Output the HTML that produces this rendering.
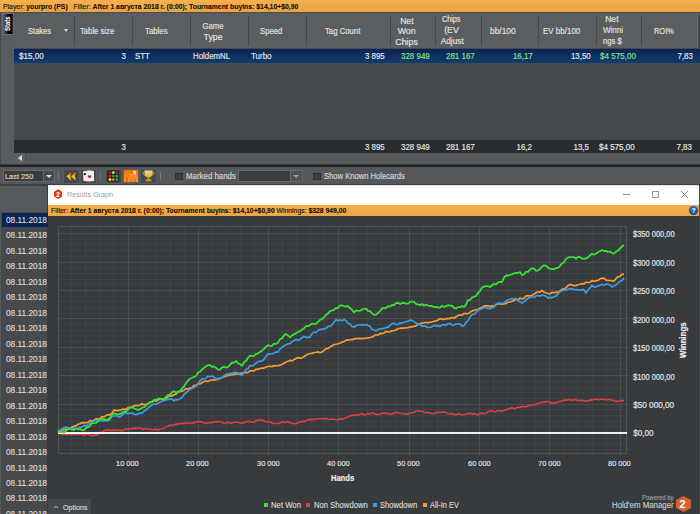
<!DOCTYPE html>
<html><head><meta charset="utf-8">
<style>
*{margin:0;padding:0;box-sizing:border-box}
html,body{width:700px;height:514px;overflow:hidden;background:#4a4d50;font-family:"Liberation Sans",sans-serif;position:relative}
.a{position:absolute}
.t{position:absolute;white-space:nowrap;line-height:1;-webkit-text-stroke:0.15px currentColor}
.sep{position:absolute;width:1px;background:#45484b;top:16px;height:30px}
.tri{position:absolute;width:0;height:0}
</style></head><body>
<!-- top filter bar -->
<div class="a" style="left:0;top:0;width:700px;height:12px;background:linear-gradient(#f6b050,#eba445)"></div>

<!-- stats grid -->
<div class="a" style="left:0;top:12px;width:14px;height:152px;background:#5a5d60;border-left:1px solid #45484b"></div>
<div class="a" style="left:1.5px;top:13.3px;width:12.5px;height:21.5px;background:linear-gradient(to right,#5a5d60 0,#3a3c3e 30%,#000 55%,#000 80%,#2a2c2e);border:1px solid #6a6d70"></div>
<div class="t" style="left:4.6px;top:31.3px;font-size:6.6px;color:#f4f4f4;transform:rotate(-90deg) scaleX(0.9);transform-origin:0 0;font-weight:bold">Stats</div>
<div class="a" style="left:14px;top:13px;width:686px;height:35px;background:#5b5e61"></div>
<div class="a" style="left:14px;top:48px;width:686px;height:92px;background:#474a4d"></div>
<div class="a" style="left:14px;top:49px;width:686px;height:14px;background:linear-gradient(#0a2452,#123c70)"></div>
<div class="a" style="left:14px;top:140px;width:686px;height:13px;background:#2a2d30"></div>
<div class="a" style="left:14px;top:153px;width:686px;height:11px;background:#56595c"></div>
<div class="a" style="left:15px;top:153px;width:11px;height:11px;background:#5e6164;border-right:1px solid #4a4d50"></div>
<div class="tri" style="left:18px;top:155px;border-top:3.5px solid transparent;border-bottom:3.5px solid transparent;border-right:4px solid #ddd"></div>
<div class="a" style="left:0;top:164px;width:700px;height:1px;background:#3a3d40"></div><div class="a" style="left:0;top:165px;width:700px;height:2px;background:#1e2022"></div>

<div class="sep" style="left:74px"></div>
<div class="sep" style="left:132px"></div>
<div class="sep" style="left:190px"></div>
<div class="sep" style="left:248px"></div>
<div class="sep" style="left:306px"></div>
<div class="sep" style="left:390px"></div>
<div class="sep" style="left:435px"></div>
<div class="sep" style="left:481px"></div>
<div class="sep" style="left:538px"></div>
<div class="sep" style="left:596px"></div>
<div class="sep" style="left:641px"></div>
<div class="a" style="left:697px;top:15px;width:3px;height:33px;background:#46494c;border-left:1px solid #6a6d70"></div>
<div class="tri" style="left:64px;top:29px;border-left:2.5px solid transparent;border-right:2.5px solid transparent;border-top:3px solid #ddd"></div>

<!-- toolbar -->
<div class="a" style="left:0;top:167px;width:700px;height:18px;background:#55585b"></div>
<div class="a" style="left:3px;top:170px;width:52px;height:12px;background:#3a3d40;border:1px solid #66696c"></div>
<div class="a" style="left:43px;top:170px;width:12px;height:12px;background:#45484b;border:1px solid #66696c"></div>
<div class="tri" style="left:46px;top:175px;border-left:3px solid transparent;border-right:3px solid transparent;border-top:3px solid #ddd"></div>
<div class="a" style="left:58px;top:172px;width:1px;height:8px;background:#777"></div>
<div class="a" style="left:62.5px;top:168.5px;width:17px;height:15px;background:#45484b;border:1px solid #5a5d60;border-radius:2px"></div>
<svg class="a" style="left:62px;top:166px" width="18" height="18"><defs><linearGradient id="rw" x1="0" y1="0" x2="0" y2="1"><stop offset="0" stop-color="#f07010"/><stop offset="1" stop-color="#f8f010"/></linearGradient></defs>
<path d="M4.2 10.3L9.2 6.2L8.2 10.3L9.2 14.4Z M8.8 10.3L13.8 6.2L12.8 10.3L13.8 14.4Z" fill="url(#rw)"/></svg>
<div class="a" style="left:80px;top:168.5px;width:17px;height:15px;background:#45484b;border:1px solid #5a5d60;border-radius:2px"></div>
<svg class="a" style="left:80px;top:166px" width="18" height="18"><path d="M3 5.5L9 4.2L14 5L14.2 15L9 15.6L3.5 15Z" fill="#f0f0f0"/><circle cx="4.8" cy="8.2" r="1.1" fill="#111"/><path d="M7.8 10.2C7.8 9 9.2 8.8 9.6 9.8C10 8.8 11.4 9 11.4 10.2C11.4 11.3 9.6 12.5 9.6 12.5C9.6 12.5 7.8 11.3 7.8 10.2Z" fill="#e01818"/></svg>
<div class="a" style="left:100px;top:172px;width:1px;height:8px;background:#6a6d70"></div>
<div class="a" style="left:105px;top:168.5px;width:17px;height:15px;background:#45484b;border:1px solid #5a5d60;border-radius:2px"></div>
<svg class="a" style="left:105px;top:166px" width="18" height="18"><rect x="2.5" y="4.5" width="11.5" height="11" fill="#161616"/>
<circle cx="5" cy="6.4" r="1.5" fill="#c81818"/><circle cx="8.3" cy="6.4" r="1.5" fill="#90e090"/><circle cx="11.9" cy="6.4" r="1.5" fill="#c81818"/>
<circle cx="5" cy="10.1" r="1.5" fill="#e02020"/><circle cx="8.3" cy="10.1" r="1.5" fill="#18a818"/><circle cx="11.9" cy="10.1" r="1.5" fill="#20c020"/>
<circle cx="5" cy="13.5" r="1.5" fill="#f0e020"/><circle cx="8.3" cy="13.5" r="1.5" fill="#f06030"/><circle cx="11.9" cy="13.5" r="1.5" fill="#20b020"/></svg>
<div class="a" style="left:122.5px;top:169px;width:16px;height:14px;background:linear-gradient(#f07000,#ffa400);border:1px solid #5a6070;border-radius:1px"></div>
<div class="a" style="left:126px;top:176.5px;width:2px;height:5px;background:#f06430"></div>
<div class="a" style="left:129.5px;top:173.5px;width:2px;height:8px;background:linear-gradient(#f8a080,#f06430)"></div>
<div class="a" style="left:133px;top:170.5px;width:2.5px;height:11px;background:linear-gradient(#fff0e0,#f89060 40%,#f06430)"></div>
<div class="a" style="left:140px;top:168.5px;width:17px;height:15px;background:#45484b;border:1px solid #5a5d60;border-radius:2px"></div>
<svg class="a" style="left:140px;top:166px" width="18" height="18"><defs><linearGradient id="tr" x1="0" y1="0" x2="0" y2="1"><stop offset="0" stop-color="#f8e080"/><stop offset="1" stop-color="#c08020"/></linearGradient></defs>
<path d="M4.5 4.5H12.5V7.5C12.5 10 11 11.2 9.2 11.6V13.2H11.5V15.5H5.5V13.2H7.8V11.6C6 11.2 4.5 10 4.5 7.5Z" fill="url(#tr)"/><path d="M4.6 5.5C2.5 5.5 2.5 9 5.2 9.2M12.4 5.5C14.5 5.5 14.5 9 11.8 9.2" stroke="#d0a040" fill="none" stroke-width="1"/></svg>
<div class="a" style="left:160px;top:172px;width:1px;height:8px;background:#777"></div>
<div class="a" style="left:175px;top:173px;width:8px;height:7px;background:#3e4144;border:1px solid #2e3134"></div>
<div class="a" style="left:238px;top:170px;width:65px;height:12px;background:#3a3d40;border:1px solid #66696c"></div>
<div class="a" style="left:290px;top:170px;width:13px;height:12px;background:#505356;border:1px solid #66696c"></div>
<div class="tri" style="left:293px;top:175px;border-left:3px solid transparent;border-right:3px solid transparent;border-top:3px solid #999"></div>
<div class="a" style="left:313px;top:173px;width:8px;height:7px;background:#3e4144;border:1px solid #2e3134"></div>
<div class="a" style="left:0;top:184px;width:700px;height:2px;background:#3e4144"></div>

<!-- date column -->
<div class="a" style="left:0;top:186px;width:48px;height:328px;background:#474a4d;border-right:1px solid #3a3d40;border-left:1px solid #585b5e"></div>
<div class="a" style="left:0;top:186px;width:47px;height:26px;background:#575a5d"></div>
<div class="a" style="left:2px;top:213px;width:46px;height:14px;background:#0a2654"></div>

<!-- graph window -->
<div class="a" style="left:48px;top:185px;width:651px;height:329px;background:#383b3e"></div>
<div class="a" style="left:48px;top:185px;width:651px;height:20px;background:#ffffff;border-top:1px solid #e4e4e4"></div>
<div class="a" style="left:54px;top:189.3px;width:8.4px;height:9.6px;background:#dc3a10;clip-path:polygon(50% 0,100% 25%,100% 75%,50% 100%,0 75%,0 25%)"></div>
<div class="t" style="left:56.1px;top:190.9px;font-size:7px;color:#fff;font-weight:bold;-webkit-text-stroke:0">2</div>
<div class="a" style="left:623px;top:194px;width:7px;height:1px;background:#8a8a8a"></div>
<div class="a" style="left:652px;top:191px;width:6.8px;height:6.6px;border:1px solid #999"></div>
<svg class="a" style="left:680px;top:190px" width="9" height="9"><path d="M1 1L8 8M8 1L1 8" stroke="#8a8a8a" stroke-width="1"/></svg>
<div class="a" style="left:48px;top:204.7px;width:651px;height:11.3px;background:linear-gradient(#f4ac4c,#eca646)"></div>
<div class="a" style="left:689.1px;top:206.1px;width:8.6px;height:8.6px;border-radius:50%;background:radial-gradient(circle at 45% 35%,#2a7ad0,#0848a0 70%,#1a5aa8)"></div>
<div class="t" style="left:691.4px;top:207.2px;font-size:7px;color:#fff;font-weight:bold;-webkit-text-stroke:0">?</div>
<svg width="700" height="514" style="position:absolute;left:0;top:0">
<line x1="71.5" y1="226" x2="71.5" y2="456" stroke="#404346"/>
<line x1="85.5" y1="226" x2="85.5" y2="456" stroke="#404346"/>
<line x1="99.5" y1="226" x2="99.5" y2="456" stroke="#404346"/>
<line x1="113.5" y1="226" x2="113.5" y2="456" stroke="#404346"/>
<line x1="142.5" y1="226" x2="142.5" y2="456" stroke="#404346"/>
<line x1="156.5" y1="226" x2="156.5" y2="456" stroke="#404346"/>
<line x1="170.5" y1="226" x2="170.5" y2="456" stroke="#404346"/>
<line x1="184.5" y1="226" x2="184.5" y2="456" stroke="#404346"/>
<line x1="212.5" y1="226" x2="212.5" y2="456" stroke="#404346"/>
<line x1="226.5" y1="226" x2="226.5" y2="456" stroke="#404346"/>
<line x1="240.5" y1="226" x2="240.5" y2="456" stroke="#404346"/>
<line x1="254.5" y1="226" x2="254.5" y2="456" stroke="#404346"/>
<line x1="282.5" y1="226" x2="282.5" y2="456" stroke="#404346"/>
<line x1="296.5" y1="226" x2="296.5" y2="456" stroke="#404346"/>
<line x1="310.5" y1="226" x2="310.5" y2="456" stroke="#404346"/>
<line x1="324.5" y1="226" x2="324.5" y2="456" stroke="#404346"/>
<line x1="353.5" y1="226" x2="353.5" y2="456" stroke="#404346"/>
<line x1="367.5" y1="226" x2="367.5" y2="456" stroke="#404346"/>
<line x1="381.5" y1="226" x2="381.5" y2="456" stroke="#404346"/>
<line x1="395.5" y1="226" x2="395.5" y2="456" stroke="#404346"/>
<line x1="423.5" y1="226" x2="423.5" y2="456" stroke="#404346"/>
<line x1="437.5" y1="226" x2="437.5" y2="456" stroke="#404346"/>
<line x1="451.5" y1="226" x2="451.5" y2="456" stroke="#404346"/>
<line x1="465.5" y1="226" x2="465.5" y2="456" stroke="#404346"/>
<line x1="493.5" y1="226" x2="493.5" y2="456" stroke="#404346"/>
<line x1="507.5" y1="226" x2="507.5" y2="456" stroke="#404346"/>
<line x1="521.5" y1="226" x2="521.5" y2="456" stroke="#404346"/>
<line x1="535.5" y1="226" x2="535.5" y2="456" stroke="#404346"/>
<line x1="563.5" y1="226" x2="563.5" y2="456" stroke="#404346"/>
<line x1="577.5" y1="226" x2="577.5" y2="456" stroke="#404346"/>
<line x1="592.5" y1="226" x2="592.5" y2="456" stroke="#404346"/>
<line x1="606.5" y1="226" x2="606.5" y2="456" stroke="#404346"/>
<line x1="58" y1="449.5" x2="629" y2="449.5" stroke="#404346"/>
<line x1="58" y1="443.5" x2="629" y2="443.5" stroke="#404346"/>
<line x1="58" y1="438.5" x2="629" y2="438.5" stroke="#404346"/>
<line x1="58" y1="426.5" x2="629" y2="426.5" stroke="#404346"/>
<line x1="58" y1="421.5" x2="629" y2="421.5" stroke="#404346"/>
<line x1="58" y1="415.5" x2="629" y2="415.5" stroke="#404346"/>
<line x1="58" y1="409.5" x2="629" y2="409.5" stroke="#404346"/>
<line x1="58" y1="398.5" x2="629" y2="398.5" stroke="#404346"/>
<line x1="58" y1="392.5" x2="629" y2="392.5" stroke="#404346"/>
<line x1="58" y1="387.5" x2="629" y2="387.5" stroke="#404346"/>
<line x1="58" y1="381.5" x2="629" y2="381.5" stroke="#404346"/>
<line x1="58" y1="369.5" x2="629" y2="369.5" stroke="#404346"/>
<line x1="58" y1="364.5" x2="629" y2="364.5" stroke="#404346"/>
<line x1="58" y1="358.5" x2="629" y2="358.5" stroke="#404346"/>
<line x1="58" y1="352.5" x2="629" y2="352.5" stroke="#404346"/>
<line x1="58" y1="341.5" x2="629" y2="341.5" stroke="#404346"/>
<line x1="58" y1="335.5" x2="629" y2="335.5" stroke="#404346"/>
<line x1="58" y1="330.5" x2="629" y2="330.5" stroke="#404346"/>
<line x1="58" y1="324.5" x2="629" y2="324.5" stroke="#404346"/>
<line x1="58" y1="313.5" x2="629" y2="313.5" stroke="#404346"/>
<line x1="58" y1="307.5" x2="629" y2="307.5" stroke="#404346"/>
<line x1="58" y1="301.5" x2="629" y2="301.5" stroke="#404346"/>
<line x1="58" y1="296.5" x2="629" y2="296.5" stroke="#404346"/>
<line x1="58" y1="284.5" x2="629" y2="284.5" stroke="#404346"/>
<line x1="58" y1="279.5" x2="629" y2="279.5" stroke="#404346"/>
<line x1="58" y1="273.5" x2="629" y2="273.5" stroke="#404346"/>
<line x1="58" y1="267.5" x2="629" y2="267.5" stroke="#404346"/>
<line x1="58" y1="256.5" x2="629" y2="256.5" stroke="#404346"/>
<line x1="58" y1="250.5" x2="629" y2="250.5" stroke="#404346"/>
<line x1="58" y1="244.5" x2="629" y2="244.5" stroke="#404346"/>
<line x1="58" y1="239.5" x2="629" y2="239.5" stroke="#404346"/>
<line x1="128.5" y1="226" x2="128.5" y2="456" stroke="#4b4e51"/>
<line x1="198.5" y1="226" x2="198.5" y2="456" stroke="#4b4e51"/>
<line x1="268.5" y1="226" x2="268.5" y2="456" stroke="#4b4e51"/>
<line x1="338.5" y1="226" x2="338.5" y2="456" stroke="#4b4e51"/>
<line x1="409.5" y1="226" x2="409.5" y2="456" stroke="#4b4e51"/>
<line x1="479.5" y1="226" x2="479.5" y2="456" stroke="#4b4e51"/>
<line x1="549.5" y1="226" x2="549.5" y2="456" stroke="#4b4e51"/>
<line x1="620.5" y1="226" x2="620.5" y2="456" stroke="#4b4e51"/>
<line x1="58" y1="432.5" x2="629" y2="432.5" stroke="#4b4e51"/>
<line x1="58" y1="404.5" x2="629" y2="404.5" stroke="#4b4e51"/>
<line x1="58" y1="375.5" x2="629" y2="375.5" stroke="#4b4e51"/>
<line x1="58" y1="347.5" x2="629" y2="347.5" stroke="#4b4e51"/>
<line x1="58" y1="318.5" x2="629" y2="318.5" stroke="#4b4e51"/>
<line x1="58" y1="290.5" x2="629" y2="290.5" stroke="#4b4e51"/>
<line x1="58" y1="262.5" x2="629" y2="262.5" stroke="#4b4e51"/>
<line x1="58" y1="233.5" x2="629" y2="233.5" stroke="#4b4e51"/>
<rect x="58.5" y="226.5" width="568" height="227" fill="none" stroke="#525558"/>
<polyline points="58.0,433.7 60.0,433.6 62.0,434.7 64.0,434.0 66.0,434.7 68.0,434.7 70.0,434.1 72.0,434.8 74.0,434.1 76.0,434.7 78.0,434.1 80.0,434.0 82.0,434.5 84.0,435.3 86.0,434.2 88.0,434.2 90.0,435.0 92.0,435.7 94.0,435.3 96.0,434.9 98.0,434.8 100.0,432.4 102.0,432.5 104.0,430.7 106.0,430.1 108.0,429.7 110.0,429.9 112.0,430.8 114.0,429.8 116.0,430.1 118.0,430.3 120.0,430.3 122.0,431.0 124.0,429.7 126.0,429.0 128.0,428.7 130.0,429.0 132.0,428.5 134.0,428.1 136.0,428.4 138.0,428.2 140.0,427.9 142.0,428.9 144.0,429.1 146.0,428.4 148.0,429.0 150.0,429.1 152.0,429.8 154.0,429.8 156.0,429.0 158.0,430.2 160.0,429.0 162.0,428.8 164.0,428.5 166.0,426.7 168.0,426.4 170.0,425.0 172.0,425.3 174.0,425.0 176.0,424.1 178.0,424.4 180.0,423.4 182.0,423.7 184.0,423.4 186.0,423.2 188.0,422.8 190.0,423.3 192.0,423.4 194.0,422.5 196.0,422.4 198.0,421.2 200.0,421.9 202.0,421.9 204.0,423.1 206.0,423.5 208.0,422.7 210.0,422.5 212.0,422.8 214.0,421.6 216.0,421.9 218.0,421.7 220.0,421.8 222.0,422.0 224.0,423.6 226.0,422.6 228.0,422.5 230.0,422.6 232.0,423.4 234.0,422.1 236.0,422.3 238.0,422.5 240.0,423.0 242.0,422.9 244.0,422.9 246.0,421.8 248.0,421.6 250.0,421.4 252.0,422.1 254.0,422.2 256.0,420.6 258.0,420.1 260.0,419.9 262.0,420.0 264.0,421.0 266.0,421.8 268.0,421.8 270.0,421.8 272.0,422.9 274.0,423.5 276.0,423.5 278.0,423.8 280.0,422.9 282.0,422.0 284.0,422.1 286.0,422.4 288.0,421.6 290.0,423.0 292.0,423.3 294.0,423.7 296.0,423.8 298.0,422.7 300.0,422.1 302.0,421.2 304.0,421.6 306.0,420.4 308.0,419.8 310.0,419.6 312.0,419.4 314.0,419.6 316.0,419.0 318.0,418.7 320.0,418.7 322.0,418.5 324.0,418.9 326.0,418.2 328.0,419.5 330.0,419.5 332.0,419.0 334.0,419.3 336.0,419.8 338.0,419.7 340.0,418.6 342.0,419.1 344.0,418.9 346.0,417.6 348.0,417.0 350.0,415.9 352.0,415.3 354.0,415.3 356.0,414.9 358.0,415.5 360.0,414.3 362.0,413.6 364.0,415.0 366.0,414.5 368.0,413.6 370.0,413.9 372.0,413.0 374.0,413.5 376.0,414.4 378.0,414.5 380.0,414.2 382.0,413.3 384.0,413.3 386.0,412.9 388.0,413.9 390.0,413.7 392.0,414.0 394.0,412.9 396.0,412.2 398.0,412.8 400.0,413.3 402.0,413.5 404.0,413.8 406.0,414.1 408.0,414.1 410.0,412.8 412.0,412.7 414.0,412.2 416.0,411.2 418.0,410.7 420.0,411.1 422.0,411.3 424.0,412.2 426.0,412.9 428.0,412.3 430.0,413.1 432.0,413.5 434.0,413.7 436.0,412.8 438.0,412.4 440.0,412.5 442.0,412.1 444.0,411.8 446.0,412.5 448.0,413.5 450.0,414.0 452.0,413.7 454.0,414.3 456.0,415.0 458.0,413.7 460.0,414.3 462.0,414.8 464.0,414.5 466.0,414.3 468.0,413.7 470.0,413.1 472.0,414.1 474.0,413.6 476.0,414.3 478.0,414.9 480.0,413.6 482.0,413.1 484.0,413.7 486.0,413.2 488.0,411.8 490.0,411.1 492.0,410.8 494.0,411.8 496.0,411.7 498.0,410.2 500.0,410.9 502.0,411.1 504.0,410.4 506.0,409.5 508.0,409.4 510.0,408.4 512.0,407.6 514.0,408.7 516.0,408.1 518.0,407.3 520.0,407.5 522.0,406.4 524.0,406.8 526.0,406.8 528.0,405.6 530.0,405.3 532.0,405.2 534.0,404.6 536.0,404.5 538.0,403.5 540.0,403.0 542.0,401.9 544.0,402.6 546.0,401.3 548.0,401.7 550.0,402.2 552.0,403.2 554.0,402.8 556.0,403.1 558.0,402.1 560.0,401.5 562.0,401.0 564.0,399.9 566.0,400.3 568.0,399.9 570.0,399.3 572.0,400.5 574.0,399.6 576.0,399.8 578.0,400.6 580.0,400.5 582.0,400.3 584.0,400.7 586.0,400.9 588.0,401.2 590.0,399.9 592.0,400.1 594.0,399.4 596.0,399.1 598.0,399.7 600.0,399.2 602.0,399.0 604.0,399.3 606.0,399.9 608.0,399.3 610.0,399.6 612.0,399.9 614.0,400.6 616.0,401.6 618.0,401.1 620.0,400.8 622.0,400.4 624.0,400.9" fill="none" stroke="#d9403e" stroke-width="1.6" stroke-linejoin="round"/>
<line x1="58" y1="433" x2="627" y2="433" stroke="#f0f0f0" stroke-width="2"/>
<polyline points="58.0,432.4 60.0,431.3 62.0,431.0 64.0,429.3 66.0,429.1 68.0,429.3 70.0,428.8 72.0,427.1 74.0,426.2 76.0,425.8 78.0,424.4 80.0,423.7 82.0,422.6 84.0,422.9 86.0,422.7 88.0,422.3 90.0,420.6 92.0,420.8 94.0,420.4 96.0,418.7 98.0,419.1 100.0,418.7 102.0,416.7 104.0,417.0 106.0,415.5 108.0,414.7 110.0,414.9 112.0,413.1 114.0,410.1 116.0,410.3 118.0,410.5 120.0,410.2 122.0,409.4 124.0,409.0 126.0,409.3 128.0,407.6 130.0,407.7 132.0,407.1 134.0,405.7 136.0,405.5 138.0,405.6 140.0,405.0 142.0,403.7 144.0,404.7 146.0,404.2 148.0,404.0 150.0,402.0 152.0,401.5 154.0,400.5 156.0,401.1 158.0,399.9 160.0,399.0 162.0,398.8 164.0,399.2 166.0,398.7 168.0,396.9 170.0,395.6 172.0,396.0 174.0,394.8 176.0,394.1 178.0,392.2 180.0,391.0 182.0,391.2 184.0,390.2 186.0,388.6 188.0,389.2 190.0,388.1 192.0,387.5 194.0,385.4 196.0,385.7 198.0,383.7 200.0,384.0 202.0,382.7 204.0,381.6 206.0,381.0 208.0,381.6 210.0,380.4 212.0,379.8 214.0,380.2 216.0,379.7 218.0,379.2 220.0,378.4 222.0,377.3 224.0,376.7 226.0,376.1 228.0,375.3 230.0,375.3 232.0,374.5 234.0,374.6 236.0,373.9 238.0,373.9 240.0,373.2 242.0,373.3 244.0,372.3 246.0,372.9 248.0,372.3 250.0,371.0 252.0,370.7 254.0,371.0 256.0,369.1 258.0,369.4 260.0,368.5 262.0,368.0 264.0,368.1 266.0,367.0 268.0,366.5 270.0,366.3 272.0,366.8 274.0,365.6 276.0,366.0 278.0,365.7 280.0,365.4 282.0,364.2 284.0,363.3 286.0,362.0 288.0,361.3 290.0,360.4 292.0,360.9 294.0,359.6 296.0,358.5 298.0,357.6 300.0,358.1 302.0,357.8 304.0,356.7 306.0,355.2 308.0,354.2 310.0,353.5 312.0,353.4 314.0,352.5 316.0,352.5 318.0,351.9 320.0,352.7 322.0,352.0 324.0,350.3 326.0,348.6 328.0,348.7 330.0,346.8 332.0,346.0 334.0,344.5 336.0,344.3 338.0,343.8 340.0,343.2 342.0,342.0 344.0,341.6 346.0,340.1 348.0,340.1 350.0,339.5 352.0,339.7 354.0,338.9 356.0,338.5 358.0,338.7 360.0,338.4 362.0,338.6 364.0,338.3 366.0,338.3 368.0,337.8 370.0,337.5 372.0,337.1 374.0,335.7 376.0,334.7 378.0,335.2 380.0,333.4 382.0,333.6 384.0,333.0 386.0,331.4 388.0,332.0 390.0,331.8 392.0,330.9 394.0,330.5 396.0,330.2 398.0,328.5 400.0,328.4 402.0,328.0 404.0,328.2 406.0,327.9 408.0,327.6 410.0,326.8 412.0,326.9 414.0,326.3 416.0,325.9 418.0,324.6 420.0,323.6 422.0,323.1 424.0,323.0 426.0,322.2 428.0,322.9 430.0,322.2 432.0,321.8 434.0,321.3 436.0,320.9 438.0,320.1 440.0,318.6 442.0,319.3 444.0,319.4 446.0,318.8 448.0,318.6 450.0,318.6 452.0,317.5 454.0,318.3 456.0,316.8 458.0,315.5 460.0,315.0 462.0,315.1 464.0,313.5 466.0,313.6 468.0,313.6 470.0,312.2 472.0,311.0 474.0,310.3 476.0,309.8 478.0,309.2 480.0,308.2 482.0,307.3 484.0,306.2 486.0,305.9 488.0,305.9 490.0,306.6 492.0,305.9 494.0,306.1 496.0,304.6 498.0,304.0 500.0,303.8 502.0,304.1 504.0,303.9 506.0,303.4 508.0,302.2 510.0,302.0 512.0,301.2 514.0,300.6 516.0,299.3 518.0,299.8 520.0,298.2 522.0,298.7 524.0,298.3 526.0,296.0 528.0,295.7 530.0,295.8 532.0,295.5 534.0,293.9 536.0,292.7 538.0,291.7 540.0,292.2 542.0,290.4 544.0,292.2 546.0,292.8 548.0,293.5 550.0,294.0 552.0,292.3 554.0,292.8 556.0,292.1 558.0,292.2 560.0,291.0 562.0,289.1 564.0,289.1 566.0,287.6 568.0,285.6 570.0,284.4 572.0,285.2 574.0,285.6 576.0,285.6 578.0,284.8 580.0,284.3 582.0,283.6 584.0,283.9 586.0,282.0 588.0,282.5 590.0,282.3 592.0,280.6 594.0,281.2 596.0,280.6 598.0,280.4 600.0,278.9 602.0,278.3 604.0,278.2 606.0,280.1 608.0,280.4 610.0,280.5 612.0,280.8 614.0,280.9 616.0,278.7 618.0,276.7 620.0,276.3 622.0,274.4 624.0,274.2" fill="none" stroke="#f79a32" stroke-width="1.7" stroke-linejoin="round"/>
<polyline points="58.0,431.4 60.0,429.8 62.0,428.9 64.0,427.6 66.0,427.1 68.0,427.7 70.0,428.1 72.0,429.0 74.0,428.2 76.0,428.5 78.0,428.4 80.0,427.3 82.0,427.2 84.0,425.4 86.0,426.3 88.0,424.5 90.0,423.5 92.0,422.0 94.0,421.0 96.0,420.1 98.0,421.7 100.0,420.5 102.0,421.0 104.0,420.9 106.0,420.9 108.0,420.9 110.0,419.6 112.0,416.3 114.0,416.0 116.0,415.8 118.0,416.6 120.0,416.8 122.0,415.0 124.0,413.7 126.0,412.6 128.0,413.9 130.0,413.2 132.0,412.6 134.0,414.1 136.0,414.8 138.0,413.9 140.0,413.1 142.0,413.1 144.0,411.2 146.0,410.0 148.0,407.9 150.0,406.5 152.0,404.9 154.0,404.0 156.0,404.2 158.0,403.4 160.0,402.0 162.0,401.1 164.0,400.7 166.0,399.7 168.0,399.6 170.0,398.9 172.0,399.2 174.0,400.8 176.0,399.4 178.0,399.9 180.0,398.6 182.0,397.5 184.0,394.6 186.0,392.7 188.0,391.0 190.0,389.6 192.0,388.1 194.0,387.6 196.0,386.0 198.0,384.4 200.0,380.9 202.0,378.8 204.0,378.8 206.0,378.2 208.0,376.2 210.0,376.7 212.0,376.0 214.0,377.0 216.0,378.8 218.0,378.4 220.0,378.0 222.0,377.8 224.0,375.8 226.0,374.6 228.0,374.0 230.0,373.7 232.0,373.1 234.0,372.6 236.0,372.3 238.0,373.2 240.0,374.6 242.0,375.1 244.0,372.9 246.0,369.5 248.0,368.6 250.0,365.5 252.0,366.0 254.0,364.9 256.0,363.2 258.0,361.8 260.0,361.1 262.0,361.1 264.0,359.5 266.0,356.3 268.0,353.9 270.0,354.2 272.0,353.9 274.0,353.0 276.0,351.9 278.0,352.1 280.0,348.9 282.0,347.3 284.0,345.7 286.0,344.9 288.0,343.8 290.0,343.5 292.0,341.9 294.0,340.5 296.0,339.6 298.0,340.3 300.0,339.4 302.0,337.7 304.0,336.6 306.0,337.2 308.0,337.6 310.0,336.9 312.0,333.9 314.0,332.2 316.0,332.5 318.0,330.6 320.0,329.4 322.0,329.4 324.0,328.7 326.0,328.3 328.0,326.4 330.0,326.5 332.0,324.7 334.0,322.2 336.0,319.4 338.0,320.9 340.0,319.8 342.0,320.7 344.0,319.6 346.0,320.7 348.0,323.2 350.0,323.8 352.0,326.5 354.0,327.2 356.0,325.8 358.0,325.0 360.0,324.8 362.0,324.9 364.0,325.1 366.0,324.5 368.0,325.6 370.0,326.3 372.0,329.5 374.0,329.8 376.0,330.9 378.0,329.4 380.0,328.8 382.0,328.7 384.0,328.4 386.0,327.4 388.0,327.3 390.0,325.3 392.0,323.9 394.0,323.1 396.0,324.5 398.0,324.4 400.0,322.8 402.0,323.2 404.0,322.3 406.0,321.7 408.0,321.1 410.0,320.2 412.0,320.4 414.0,321.7 416.0,322.7 418.0,324.9 420.0,324.1 422.0,326.4 424.0,325.8 426.0,326.6 428.0,327.4 430.0,327.5 432.0,326.6 434.0,325.4 436.0,325.9 438.0,325.6 440.0,326.5 442.0,324.9 444.0,324.6 446.0,325.4 448.0,323.5 450.0,323.6 452.0,324.8 454.0,325.2 456.0,323.9 458.0,323.8 460.0,324.1 462.0,326.3 464.0,325.6 466.0,322.4 468.0,320.7 470.0,317.2 472.0,314.5 474.0,314.4 476.0,312.5 478.0,310.1 480.0,309.4 482.0,308.5 484.0,308.0 486.0,307.2 488.0,308.5 490.0,309.0 492.0,307.5 494.0,307.1 496.0,304.2 498.0,303.2 500.0,303.0 502.0,303.4 504.0,303.0 506.0,301.1 508.0,299.7 510.0,299.2 512.0,298.7 514.0,298.9 516.0,298.5 518.0,300.5 520.0,301.7 522.0,302.9 524.0,301.7 526.0,300.2 528.0,298.4 530.0,297.3 532.0,297.0 534.0,297.5 536.0,295.8 538.0,295.4 540.0,296.2 542.0,295.0 544.0,295.4 546.0,296.2 548.0,298.2 550.0,297.3 552.0,297.7 554.0,296.8 556.0,296.1 558.0,293.6 560.0,291.8 562.0,290.6 564.0,290.5 566.0,290.1 568.0,289.2 570.0,288.6 572.0,288.9 574.0,289.4 576.0,289.6 578.0,289.9 580.0,290.1 582.0,289.8 584.0,289.7 586.0,293.0 588.0,289.8 590.0,288.0 592.0,285.4 594.0,287.0 596.0,286.8 598.0,286.0 600.0,285.2 602.0,284.3 604.0,285.2 606.0,284.2 608.0,284.2 610.0,285.2 612.0,287.0 614.0,285.9 616.0,284.7 618.0,283.2 620.0,281.2 622.0,280.7 624.0,277.7" fill="none" stroke="#3a9de0" stroke-width="1.7" stroke-linejoin="round"/>
<polyline points="58.0,431.9 60.0,431.7 62.0,432.1 64.0,432.5 66.0,430.8 68.0,429.2 70.0,428.5 72.0,429.6 74.0,430.1 76.0,428.4 78.0,429.5 80.0,429.0 82.0,430.3 84.0,430.1 86.0,427.8 88.0,427.1 90.0,426.0 92.0,423.1 94.0,423.2 96.0,422.8 98.0,420.7 100.0,419.7 102.0,418.8 104.0,419.1 106.0,419.6 108.0,419.5 110.0,417.8 112.0,414.9 114.0,413.3 116.0,413.8 118.0,414.7 120.0,413.9 122.0,412.8 124.0,411.4 126.0,411.5 128.0,409.7 130.0,407.1 132.0,407.3 134.0,408.3 136.0,409.2 138.0,409.9 140.0,409.2 142.0,407.6 144.0,407.3 146.0,405.6 148.0,403.8 150.0,402.3 152.0,402.3 154.0,399.8 156.0,399.7 158.0,398.9 160.0,398.5 162.0,399.1 164.0,399.3 166.0,396.8 168.0,394.8 170.0,394.6 172.0,392.4 174.0,391.3 176.0,392.6 178.0,391.5 180.0,391.7 182.0,388.3 184.0,386.5 186.0,383.1 188.0,380.7 190.0,378.6 192.0,378.0 194.0,376.9 196.0,376.0 198.0,372.6 200.0,371.6 202.0,369.5 204.0,367.9 206.0,366.2 208.0,365.3 210.0,364.9 212.0,366.9 214.0,366.4 216.0,367.8 218.0,369.6 220.0,369.7 222.0,367.6 224.0,366.6 226.0,367.7 228.0,367.0 230.0,364.9 232.0,362.5 234.0,362.9 236.0,360.9 238.0,363.2 240.0,364.1 242.0,365.8 244.0,362.2 246.0,361.0 248.0,357.8 250.0,355.7 252.0,356.2 254.0,355.9 256.0,354.0 258.0,353.3 260.0,352.0 262.0,350.7 264.0,348.9 266.0,346.7 268.0,345.2 270.0,345.8 272.0,345.9 274.0,343.7 276.0,343.9 278.0,342.6 280.0,339.1 282.0,338.5 284.0,335.3 286.0,334.0 288.0,335.6 290.0,337.3 292.0,335.4 294.0,334.2 296.0,333.4 298.0,331.9 300.0,331.1 302.0,329.6 304.0,328.4 306.0,326.2 308.0,326.2 310.0,325.0 312.0,323.7 314.0,324.1 316.0,323.7 318.0,321.8 320.0,319.8 322.0,319.0 324.0,317.1 326.0,315.0 328.0,313.6 330.0,311.0 332.0,310.6 334.0,309.9 336.0,308.0 338.0,308.0 340.0,305.6 342.0,305.3 344.0,306.3 346.0,306.5 348.0,306.1 350.0,308.3 352.0,309.7 354.0,312.5 356.0,310.3 358.0,310.8 360.0,310.7 362.0,309.5 364.0,308.9 366.0,308.6 368.0,310.9 370.0,311.2 372.0,313.4 374.0,314.8 376.0,314.6 378.0,313.0 380.0,311.1 382.0,308.5 384.0,307.9 386.0,308.0 388.0,306.2 390.0,306.7 392.0,304.9 394.0,305.1 396.0,303.1 398.0,302.8 400.0,304.1 402.0,303.0 404.0,303.0 406.0,303.7 408.0,303.6 410.0,302.1 412.0,301.4 414.0,301.8 416.0,304.0 418.0,304.3 420.0,305.1 422.0,304.1 424.0,305.5 426.0,304.6 428.0,305.5 430.0,306.1 432.0,305.9 434.0,307.2 436.0,307.0 438.0,307.3 440.0,307.6 442.0,305.7 444.0,306.9 446.0,306.2 448.0,305.2 450.0,305.6 452.0,305.6 454.0,308.0 456.0,308.4 458.0,307.1 460.0,307.2 462.0,306.0 464.0,306.9 466.0,304.7 468.0,300.1 470.0,300.0 472.0,297.6 474.0,296.7 476.0,296.1 478.0,293.1 480.0,290.8 482.0,287.7 484.0,286.6 486.0,286.2 488.0,286.1 490.0,287.0 492.0,285.3 494.0,284.0 496.0,284.4 498.0,282.4 500.0,281.8 502.0,282.1 504.0,277.7 506.0,275.5 508.0,275.7 510.0,275.0 512.0,274.4 514.0,273.3 516.0,273.0 518.0,273.0 520.0,272.1 522.0,275.2 524.0,274.2 526.0,271.8 528.0,271.8 530.0,269.7 532.0,268.2 534.0,268.7 536.0,270.9 538.0,270.3 540.0,268.9 542.0,266.7 544.0,265.3 546.0,265.6 548.0,267.9 550.0,268.7 552.0,269.0 554.0,269.3 556.0,268.0 558.0,267.9 560.0,266.0 562.0,263.3 564.0,262.5 566.0,258.9 568.0,257.6 570.0,257.1 572.0,257.2 574.0,257.2 576.0,258.7 578.0,256.8 580.0,257.2 582.0,258.5 584.0,258.6 586.0,258.5 588.0,257.4 590.0,255.4 592.0,253.7 594.0,254.7 596.0,253.6 598.0,252.2 600.0,251.2 602.0,250.0 604.0,251.0 606.0,250.9 608.0,252.0 610.0,251.4 612.0,253.2 614.0,253.7 616.0,251.7 618.0,250.5 620.0,248.5 622.0,246.6 624.0,245.0" fill="none" stroke="#38e038" stroke-width="1.8" stroke-linejoin="round"/>
</svg>

<div class="a" style="left:48px;top:499px;width:43px;height:15px;background:#46494c"></div>
<div class="t" style="top:3.36px;font-size:7.6px;color:#140c00;left:3.20px;transform:scaleX(0.902);transform-origin:0 0;-webkit-text-stroke:0.1px currentColor"><span style="color:#1a1206;-webkit-text-stroke:0.15px #1a1206">Player:</span> <b>yourpro (PS)</b>&nbsp;&nbsp; <span style="color:#1a1206;-webkit-text-stroke:0.15px #1a1206">Filter:</span> <b>After 1 августа 2018 г. (0:00); Tournament buyins: $14,10+$0,90</b></div>
<div class="t" style="top:27.18px;font-size:8.8px;color:#e4e4e4;left:28.00px;transform:scaleX(0.859);transform-origin:0 0;">Stakes</div>
<div class="t" style="top:27.18px;font-size:8.8px;color:#e4e4e4;left:80.20px;transform:scaleX(0.874);transform-origin:0 0;">Table size</div>
<div class="t" style="top:27.18px;font-size:8.8px;color:#e4e4e4;left:144.50px;transform:scaleX(0.888);transform-origin:0 0;">Tables</div>
<div class="t" style="top:21.78px;font-size:8.8px;color:#e4e4e4;left:201.12px;width:23.96px;text-align:center;transform:scaleX(0.880);transform-origin:50% 0;">Game</div>
<div class="t" style="top:32.78px;font-size:8.8px;color:#e4e4e4;left:203.56px;width:19.08px;text-align:center;">Type</div>
<div class="t" style="top:27.18px;font-size:8.8px;color:#e4e4e4;left:259.70px;transform:scaleX(0.876);transform-origin:0 0;">Speed</div>
<div class="t" style="top:27.18px;font-size:8.8px;color:#e4e4e4;left:324.50px;transform:scaleX(0.880);transform-origin:0 0;">Tag Count</div>
<div class="t" style="top:16.58px;font-size:8.8px;color:#e4e4e4;left:399.75px;width:13.69px;text-align:center;transform:scaleX(0.979);transform-origin:50% 0;">Net</div>
<div class="t" style="top:27.38px;font-size:8.8px;color:#e4e4e4;left:397.63px;width:17.94px;text-align:center;">Won</div>
<div class="t" style="top:38.48px;font-size:8.8px;color:#e4e4e4;left:395.35px;width:22.50px;text-align:center;">Chips</div>
<div class="t" style="top:15.38px;font-size:8.8px;color:#e4e4e4;left:440.25px;width:22.50px;text-align:center;transform:scaleX(0.822);transform-origin:50% 0;">Chips</div>
<div class="t" style="top:26.28px;font-size:8.8px;color:#e4e4e4;left:444.17px;width:14.67px;text-align:center;">(EV</div>
<div class="t" style="top:37.18px;font-size:8.8px;color:#e4e4e4;left:440.27px;width:24.46px;text-align:center;transform:scaleX(0.936);transform-origin:50% 0;">Adjust</div>
<div class="t" style="top:27.18px;font-size:8.8px;color:#e4e4e4;left:490.40px;transform:scaleX(0.955);transform-origin:0 0;">bb/100</div>
<div class="t" style="top:27.18px;font-size:8.8px;color:#e4e4e4;left:542.60px;transform:scaleX(0.908);transform-origin:0 0;">EV bb/100</div>
<div class="t" style="top:15.38px;font-size:8.8px;color:#e4e4e4;left:605.45px;width:13.69px;text-align:center;transform:scaleX(0.979);transform-origin:50% 0;">Net</div>
<div class="t" style="top:26.28px;font-size:8.8px;color:#e4e4e4;left:602.80px;transform:scaleX(0.909);transform-origin:0 0;">Winni</div>
<div class="t" style="top:37.18px;font-size:8.8px;color:#e4e4e4;left:602.80px;transform:scaleX(0.869);transform-origin:0 0;">ngs $</div>
<div class="t" style="top:27.18px;font-size:8.8px;color:#e4e4e4;left:654.40px;transform:scaleX(0.844);transform-origin:0 0;">ROI%</div>
<div class="t" style="top:51.99px;font-size:8.7px;color:#e8e8e8;left:19.40px;transform:scaleX(0.936);transform-origin:0 0;">$15,00</div>
<div class="t" style="top:51.99px;font-size:8.7px;color:#e8e8e8;right:574.50px;transform:scaleX(0.910);transform-origin:100% 0;">3</div>
<div class="t" style="top:51.99px;font-size:8.7px;color:#e8e8e8;left:135.00px;transform:scaleX(0.910);transform-origin:0 0;">STT</div>
<div class="t" style="top:51.99px;font-size:8.7px;color:#e8e8e8;left:192.90px;transform:scaleX(0.903);transform-origin:0 0;">HoldemNL</div>
<div class="t" style="top:51.99px;font-size:8.7px;color:#e8e8e8;left:250.70px;transform:scaleX(0.919);transform-origin:0 0;">Turbo</div>
<div class="t" style="top:51.99px;font-size:8.7px;color:#e8e8e8;right:315.00px;transform:scaleX(0.910);transform-origin:100% 0;">3 895</div>
<div class="t" style="top:51.99px;font-size:8.7px;color:#8fe08f;left:401.20px;transform:scaleX(0.916);transform-origin:0 0;">328 949</div>
<div class="t" style="top:51.99px;font-size:8.7px;color:#8fe08f;left:446.20px;transform:scaleX(0.916);transform-origin:0 0;">281 167</div>
<div class="t" style="top:51.99px;font-size:8.7px;color:#8fe08f;right:167.10px;transform:scaleX(0.910);transform-origin:100% 0;">16,17</div>
<div class="t" style="top:51.99px;font-size:8.7px;color:#e8e8e8;right:109.30px;transform:scaleX(0.910);transform-origin:100% 0;">13,50</div>
<div class="t" style="top:51.99px;font-size:8.7px;color:#8fe08f;left:599.70px;transform:scaleX(0.930);transform-origin:0 0;">$4 575,00</div>
<div class="t" style="top:51.99px;font-size:8.7px;color:#e8e8e8;right:7.00px;transform:scaleX(0.910);transform-origin:100% 0;">7,83</div>
<div class="t" style="top:142.59px;font-size:8.7px;color:#e8e8e8;right:574.50px;transform:scaleX(0.910);transform-origin:100% 0;">3</div>
<div class="t" style="top:142.59px;font-size:8.7px;color:#e8e8e8;right:315.00px;transform:scaleX(0.910);transform-origin:100% 0;">3 895</div>
<div class="t" style="top:142.59px;font-size:8.7px;color:#e8e8e8;left:401.20px;transform:scaleX(0.916);transform-origin:0 0;">328 949</div>
<div class="t" style="top:142.59px;font-size:8.7px;color:#e8e8e8;left:446.20px;transform:scaleX(0.916);transform-origin:0 0;">281 167</div>
<div class="t" style="top:142.59px;font-size:8.7px;color:#e8e8e8;right:168.00px;transform:scaleX(0.910);transform-origin:100% 0;">16,2</div>
<div class="t" style="top:142.59px;font-size:8.7px;color:#e8e8e8;right:111.00px;transform:scaleX(0.910);transform-origin:100% 0;">13,5</div>
<div class="t" style="top:142.59px;font-size:8.7px;color:#e8e8e8;left:598.60px;transform:scaleX(0.922);transform-origin:0 0;">$4 575,00</div>
<div class="t" style="top:142.59px;font-size:8.7px;color:#e8e8e8;right:8.00px;transform:scaleX(0.910);transform-origin:100% 0;">7,83</div>
<div class="t" style="top:173.10px;font-size:8px;color:#d8d8d8;left:4.50px;transform:scaleX(0.922);transform-origin:0 0;">Last 250</div>
<div class="t" style="top:173.07px;font-size:8.2px;color:#d8d8d8;left:186.00px;transform:scaleX(0.962);transform-origin:0 0;">Marked hands</div>
<div class="t" style="top:173.07px;font-size:8.2px;color:#d8d8d8;left:324.00px;transform:scaleX(0.930);transform-origin:0 0;">Show Known Holecards</div>
<div class="t" style="top:191.30px;font-size:8px;color:#9da1a5;left:66.90px;transform:scaleX(0.900);transform-origin:0 0;-webkit-text-stroke:0">Results Graph</div>
<div class="t" style="top:206.76px;font-size:7.6px;color:#140c00;left:50.80px;transform:scaleX(0.897);transform-origin:0 0;-webkit-text-stroke:0.1px currentColor"><span style="color:#1a1206;-webkit-text-stroke:0.15px #1a1206">Filter:</span> <b>After 1 августа 2018 г. (0:00); Tournament buyins: $14,10+$0,90</b> <span style="color:#1a1206;-webkit-text-stroke:0.15px #1a1206">Winnings:</span> <b>$328 949,00</b></div>
<div class="t" style="top:215.98px;font-size:8.8px;color:#dcdcdc;left:5.80px;transform:scaleX(0.943);transform-origin:0 0;">08.11.2018</div>
<div class="t" style="top:231.45px;font-size:8.8px;color:#dcdcdc;left:5.80px;transform:scaleX(0.943);transform-origin:0 0;">08.11.2018</div>
<div class="t" style="top:246.92px;font-size:8.8px;color:#dcdcdc;left:5.80px;transform:scaleX(0.943);transform-origin:0 0;">08.11.2018</div>
<div class="t" style="top:262.39px;font-size:8.8px;color:#dcdcdc;left:5.80px;transform:scaleX(0.943);transform-origin:0 0;">08.11.2018</div>
<div class="t" style="top:277.86px;font-size:8.8px;color:#dcdcdc;left:5.80px;transform:scaleX(0.943);transform-origin:0 0;">08.11.2018</div>
<div class="t" style="top:293.33px;font-size:8.8px;color:#dcdcdc;left:5.80px;transform:scaleX(0.943);transform-origin:0 0;">08.11.2018</div>
<div class="t" style="top:308.80px;font-size:8.8px;color:#dcdcdc;left:5.80px;transform:scaleX(0.943);transform-origin:0 0;">08.11.2018</div>
<div class="t" style="top:324.27px;font-size:8.8px;color:#dcdcdc;left:5.80px;transform:scaleX(0.943);transform-origin:0 0;">08.11.2018</div>
<div class="t" style="top:339.74px;font-size:8.8px;color:#dcdcdc;left:5.80px;transform:scaleX(0.943);transform-origin:0 0;">08.11.2018</div>
<div class="t" style="top:355.21px;font-size:8.8px;color:#dcdcdc;left:5.80px;transform:scaleX(0.943);transform-origin:0 0;">08.11.2018</div>
<div class="t" style="top:370.68px;font-size:8.8px;color:#dcdcdc;left:5.80px;transform:scaleX(0.943);transform-origin:0 0;">08.11.2018</div>
<div class="t" style="top:386.15px;font-size:8.8px;color:#dcdcdc;left:5.80px;transform:scaleX(0.943);transform-origin:0 0;">08.11.2018</div>
<div class="t" style="top:401.62px;font-size:8.8px;color:#dcdcdc;left:5.80px;transform:scaleX(0.943);transform-origin:0 0;">08.11.2018</div>
<div class="t" style="top:417.09px;font-size:8.8px;color:#dcdcdc;left:5.80px;transform:scaleX(0.943);transform-origin:0 0;">08.11.2018</div>
<div class="t" style="top:432.56px;font-size:8.8px;color:#dcdcdc;left:5.80px;transform:scaleX(0.943);transform-origin:0 0;">08.11.2018</div>
<div class="t" style="top:448.03px;font-size:8.8px;color:#dcdcdc;left:5.80px;transform:scaleX(0.943);transform-origin:0 0;">08.11.2018</div>
<div class="t" style="top:463.50px;font-size:8.8px;color:#dcdcdc;left:5.80px;transform:scaleX(0.943);transform-origin:0 0;">08.11.2018</div>
<div class="t" style="top:478.97px;font-size:8.8px;color:#dcdcdc;left:5.80px;transform:scaleX(0.943);transform-origin:0 0;">08.11.2018</div>
<div class="t" style="top:494.44px;font-size:8.8px;color:#dcdcdc;left:5.80px;transform:scaleX(0.943);transform-origin:0 0;">08.11.2018</div>
<div class="t" style="top:509.91px;font-size:8.8px;color:#dcdcdc;left:5.80px;transform:scaleX(0.943);transform-origin:0 0;">08.11.2018</div>
<div class="t" style="top:231.47px;font-size:8.2px;color:#e8e8e8;left:633.20px;transform:scaleX(0.914);transform-origin:0 0;">$350 000,00</div>
<div class="t" style="top:259.88px;font-size:8.2px;color:#e8e8e8;left:633.20px;transform:scaleX(0.914);transform-origin:0 0;">$300 000,00</div>
<div class="t" style="top:288.29px;font-size:8.2px;color:#e8e8e8;left:633.20px;transform:scaleX(0.914);transform-origin:0 0;">$250 000,00</div>
<div class="t" style="top:316.70px;font-size:8.2px;color:#e8e8e8;left:633.20px;transform:scaleX(0.914);transform-origin:0 0;">$200 000,00</div>
<div class="t" style="top:345.11px;font-size:8.2px;color:#e8e8e8;left:633.20px;transform:scaleX(0.914);transform-origin:0 0;">$150 000,00</div>
<div class="t" style="top:373.52px;font-size:8.2px;color:#e8e8e8;left:633.20px;transform:scaleX(0.914);transform-origin:0 0;">$100 000,00</div>
<div class="t" style="top:401.93px;font-size:8.2px;color:#e8e8e8;left:633.20px;">$50 000,00</div>
<div class="t" style="top:430.34px;font-size:8.2px;color:#e8e8e8;left:633.20px;">$0,00</div>
<div class="t" style="top:459.59px;font-size:8.1px;color:#e8e8e8;left:115.12px;width:24.77px;text-align:center;transform:scaleX(0.912);transform-origin:50% 0;">10 000</div>
<div class="t" style="top:459.59px;font-size:8.1px;color:#e8e8e8;left:185.43px;width:24.77px;text-align:center;transform:scaleX(0.912);transform-origin:50% 0;">20 000</div>
<div class="t" style="top:459.59px;font-size:8.1px;color:#e8e8e8;left:255.74px;width:24.77px;text-align:center;transform:scaleX(0.912);transform-origin:50% 0;">30 000</div>
<div class="t" style="top:459.59px;font-size:8.1px;color:#e8e8e8;left:326.05px;width:24.77px;text-align:center;transform:scaleX(0.912);transform-origin:50% 0;">40 000</div>
<div class="t" style="top:459.59px;font-size:8.1px;color:#e8e8e8;left:396.36px;width:24.77px;text-align:center;transform:scaleX(0.912);transform-origin:50% 0;">50 000</div>
<div class="t" style="top:459.59px;font-size:8.1px;color:#e8e8e8;left:466.67px;width:24.77px;text-align:center;transform:scaleX(0.912);transform-origin:50% 0;">60 000</div>
<div class="t" style="top:459.59px;font-size:8.1px;color:#e8e8e8;left:536.98px;width:24.77px;text-align:center;transform:scaleX(0.912);transform-origin:50% 0;">70 000</div>
<div class="t" style="top:459.59px;font-size:8.1px;color:#e8e8e8;left:607.29px;width:24.77px;text-align:center;transform:scaleX(0.912);transform-origin:50% 0;">80 000</div>
<div class="t" style="top:475.37px;font-size:8.2px;color:#f0f0f0;font-weight:bold;left:329.87px;width:25.06px;text-align:center;transform:scaleX(0.926);transform-origin:50% 0;">Hands</div>
<div class="t" style="top:501.57px;font-size:8.2px;color:#d8d8d8;left:271.10px;transform:scaleX(0.945);transform-origin:0 0;">Net Won</div>
<div class="t" style="top:501.57px;font-size:8.2px;color:#d8d8d8;left:313.70px;transform:scaleX(0.937);transform-origin:0 0;">Non Showdown</div>
<div class="t" style="top:501.57px;font-size:8.2px;color:#d8d8d8;left:379.60px;transform:scaleX(0.932);transform-origin:0 0;">Showdown</div>
<div class="t" style="top:501.57px;font-size:8.2px;color:#d8d8d8;left:429.60px;transform:scaleX(0.906);transform-origin:0 0;">All-In EV</div>
<div class="t" style="top:503.80px;font-size:8px;color:#d8d8d8;left:63.40px;transform:scaleX(0.892);transform-origin:0 0;">Options</div>
<div class="t" style="top:494.78px;font-size:6.8px;color:#9a9ea2;left:642.00px;transform:scaleX(0.880);transform-origin:0 0;">Powered by</div>
<div class="t" style="top:501.03px;font-size:8.5px;color:#c8ccd0;left:612.00px;transform:scaleX(0.922);transform-origin:0 0;">Hold'em Manager</div>

<div class="t" style="left:680.2px;top:357.8px;font-size:8.2px;color:#f0f0f0;font-weight:bold;transform:rotate(-90deg) scaleX(0.97);transform-origin:0 0">Winnings</div>
<!-- legend -->
<div class="a" style="left:264px;top:503px;width:4px;height:4px;background:#38e038"></div>
<div class="a" style="left:306px;top:503px;width:4px;height:4px;background:#e04040"></div>
<div class="a" style="left:373px;top:503px;width:4px;height:4px;background:#3a9de0"></div>
<div class="a" style="left:423px;top:503px;width:4px;height:4px;background:#f79a32"></div>
<!-- options -->
<svg class="a" style="left:52.5px;top:504.5px" width="6" height="4"><path d="M1 3L3 1.2L5 3" stroke="#bbb" fill="none" stroke-width="0.9"/></svg>
<!-- logo -->
<div class="a" style="left:676px;top:496px;width:15px;height:16px;background:#d4622a;clip-path:polygon(50% 0,100% 25%,100% 75%,50% 100%,0 75%,0 25%)"></div>
<div class="t" style="left:679.5px;top:499px;font-size:11px;color:#fff;font-weight:bold">2</div>
</body></html>
